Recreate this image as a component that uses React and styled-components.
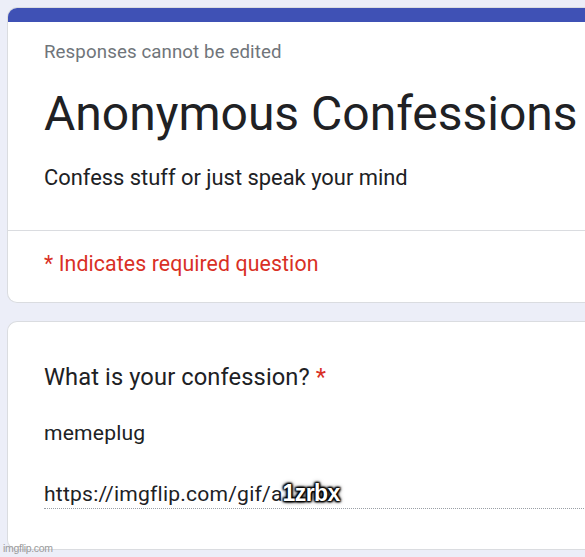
import React from "react";
import styled, { createGlobalStyle } from "styled-components";

const Global = createGlobalStyle`
  html, body { margin: 0; padding: 0; }
  body {
    background: #eceef8;
    font-family: Roboto, "Liberation Sans", Arial, sans-serif;
    width: 585px;
    height: 557px;
    overflow: hidden;
  }
`;

const Page = styled.div`
  position: relative;
  width: 585px;
  height: 557px;
  overflow: hidden;
  padding: 7px 0 0 7px;
  box-sizing: border-box;
  display: flex;
  flex-direction: column;
  gap: 18px;
`;

const Card = styled.section`
  background: #fff;
  border: 1px solid #dadce0;
  border-right: none;
  border-radius: 10px 0 0 10px;
  overflow: hidden;
  width: 620px;
  flex-shrink: 0;
`;

const TopBar = styled.div`
  height: 15px;
  background: #3f51b5;
  margin: -1px 0 0 -1px;
`;

const Header = styled.div`
  padding: 20px 0 0 36px;
`;

const Notice = styled.div`
  font-size: 18.7px;
  color: #70757a;
  line-height: 20px;
  letter-spacing: 0.1px;
`;

const Title = styled.h1`
  margin: 22px 0 0;
  font-size: 48px;
  font-weight: 400;
  color: #202124;
  line-height: 60px;
  white-space: nowrap;
`;

const Description = styled.div`
  margin-top: 21px;
  font-size: 21.9px;
  color: #202124;
  line-height: 26px;
  padding-bottom: 39px;
`;

const Divider = styled.div`
  height: 1px;
  background: #dadce0;
`;

const Required = styled.div`
  padding: 20px 0 25px 36px;
  font-size: 21.3px;
  color: #d93025;
  line-height: 26px;
  letter-spacing: 0.1px;
`;

const QuestionBody = styled.div`
  padding: 41px 0 40px 36px;
`;

const Question = styled.div`
  font-size: 23.7px;
  color: #202124;
  line-height: 28px;
  letter-spacing: 0.1px;
`;

const Star = styled.span`
  color: #d93025;
`;

const Answer = styled.div`
  margin-top: ${(p) => p.$gap}px;
  font-size: 21.1px;
  color: #202124;
  line-height: 26px;
  letter-spacing: 0.2px;
  padding-bottom: ${(p) => (p.$underline ? 1 : 0)}px;
  border-bottom: ${(p) => (p.$underline ? "1px dotted #9aa0a6" : "none")};
  white-space: nowrap;
`;

const Overlay = styled.span`
  color: #fff;
  font-family: "Liberation Sans", Arial, sans-serif;
  font-weight: 700;
  font-size: 23px;
  letter-spacing: -0.6px;
  text-shadow: 0 0 2px #000, 0 0 3px #000, 0 0 5px #000, 1px 1px 2px #000, -1px -1px 2px #000, 1px -1px 2px #000, -1px 1px 2px #000;
`;

const Watermark = styled.div`
  position: absolute;
  left: 3px;
  bottom: 3px;
  font-family: "Liberation Sans", Arial, sans-serif;
  font-size: 10.5px;
  color: #9a9a9a;
  letter-spacing: -0.3px;
`;

export default function App() {
  return (
    <>
      <Global />
      <Page>
        <Card>
          <TopBar />
          <Header>
            <Notice>Responses cannot be edited</Notice>
            <Title>Anonymous Confessions</Title>
            <Description>Confess stuff or just speak your mind</Description>
          </Header>
          <Divider />
          <Required>* Indicates required question</Required>
        </Card>
        <Card>
          <QuestionBody>
            <Question>
              What is your confession? <Star>*</Star>
            </Question>
            <Answer $gap={29}>memeplug</Answer>
            <Answer $gap={34} $underline>
              https://imgflip.com/gif/a<Overlay>1zrbx</Overlay>
            </Answer>
          </QuestionBody>
        </Card>
        <Watermark>imgflip.com</Watermark>
      </Page>
    </>
  );
}
